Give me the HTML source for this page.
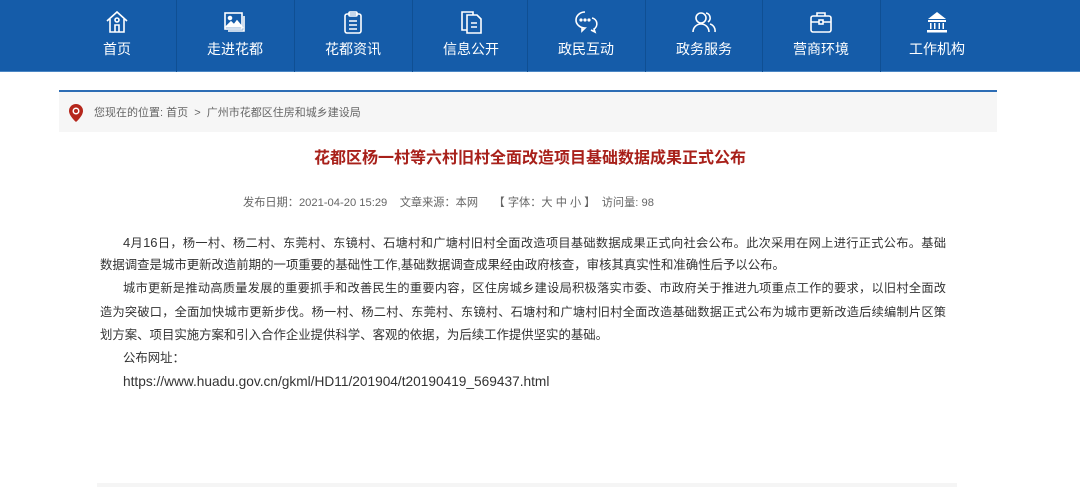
<!DOCTYPE html>
<html><head><meta charset="utf-8"><style>
*{margin:0;padding:0;box-sizing:border-box}
body{width:1080px;height:487px;background:#fff;font-family:"Liberation Sans","Noto Sans CJK SC",sans-serif;position:relative;overflow:hidden}
.nav{position:absolute;left:0;top:0;width:1080px;height:72px;background:#155ca9;border-bottom:1px solid #4a86c4}
.it{position:absolute;top:0;width:118px;height:72px;text-align:center;color:#fff}
.it svg{position:absolute;left:47px;top:10px;width:24px;height:24px}
.it span{position:absolute;left:0;right:0;top:40px;font-size:14px;line-height:18px}
.sep{position:absolute;top:0;width:1px;height:72px;background:#0f4f93}
.bc{position:absolute;left:59px;top:90px;width:938px;height:42px;background:#f6f6f6;border-top:2px solid #2d6db5}
.bc .t{position:absolute;left:35px;top:14px;font-size:11px;color:#666;line-height:14px}
h1{position:absolute;left:0;width:1060px;top:148px;text-align:center;font-size:16px;color:#a8201a;font-weight:bold;line-height:22px}
.meta{position:absolute;left:243px;top:196px;font-size:11.2px;color:#666;line-height:14px;white-space:pre}
.body{position:absolute;left:100px;top:231px;width:846px;font-size:12.4px;line-height:23.2px;color:#333}
.body div{white-space:nowrap;height:23.2px}
.j{text-align:justify;text-align-last:justify;font-size:12.2px}
.in{padding-left:23px}
.u{font-size:13.7px}
.j .u{font-size:13px}
.foot{position:absolute;left:97px;top:483px;width:860px;height:4px;background:#f5f5f5}
</style></head><body>
<div class="nav">
<div class="it" style="left:58px"><svg viewBox="0 0 24 24" fill="none" stroke="#fff" stroke-width="1.6"><path d="M2 11L12 2l10 9"/><path d="M5 9v13h14V9"/><circle cx="12" cy="10" r="2"/><path d="M10 22v-7h4v7"/></svg><span>首页</span></div>
<div class="sep" style="left:176px"></div>
<div class="it" style="left:176px"><svg viewBox="0 0 24 24" fill="none" stroke="#fff" stroke-width="1.6"><rect x="2" y="3" width="17" height="16"/><path d="M21 6v15H5"/><circle cx="7" cy="8" r="1.5" fill="#fff"/><path d="M3 17l5-5 3 3 3-4 5 6z" fill="#fff"/></svg><span>走进花都</span></div>
<div class="sep" style="left:294px"></div>
<div class="it" style="left:294px"><svg viewBox="0 0 24 24" fill="none" stroke="#fff" stroke-width="1.6"><rect x="4" y="4" width="16" height="19" rx="2"/><rect x="8" y="2" width="8" height="4" rx="1"/><path d="M8 11h8M8 15h8M8 19h8"/></svg><span>花都资讯</span></div>
<div class="sep" style="left:412px"></div>
<div class="it" style="left:412px"><svg viewBox="0 0 24 24" fill="none" stroke="#fff" stroke-width="1.6"><path d="M8 5h10l4 4v14H8z"/><path d="M8 20H3V2h11v3"/><path d="M12 13h6M12 17h6"/></svg><span>信息公开</span></div>
<div class="sep" style="left:527px"></div>
<div class="it" style="left:527px"><svg viewBox="0 0 24 24" fill="none" stroke="#fff" stroke-width="1.6"><path d="M11 2a9 8 0 1 0 0 16l-3 3v-3.5"/><path d="M18 8a6 6 0 0 1 2 11l1 3-4-2"/><circle cx="7" cy="10" r=".8" fill="#fff"/><circle cx="11" cy="10" r=".8" fill="#fff"/><circle cx="15" cy="10" r=".8" fill="#fff"/></svg><span>政民互动</span></div>
<div class="sep" style="left:645px"></div>
<div class="it" style="left:645px"><svg viewBox="0 0 24 24" fill="none" stroke="#fff" stroke-width="1.6"><circle cx="9" cy="8" r="5"/><path d="M1 22a8 8 0 0 1 16 0"/><path d="M14 3a5 5 0 0 1 2 9"/><path d="M18 14a7 7 0 0 1 5 8"/></svg><span>政务服务</span></div>
<div class="sep" style="left:762px"></div>
<div class="it" style="left:762px"><svg viewBox="0 0 24 24" fill="none" stroke="#fff" stroke-width="1.6"><rect x="2" y="6" width="20" height="16" rx="2"/><path d="M8 6V3h8v3M2 12h20"/><rect x="10" y="10" width="4" height="4" fill="#155ca9"/></svg><span>营商环境</span></div>
<div class="sep" style="left:880px"></div>
<div class="it" style="left:878px"><svg viewBox="0 0 24 24" fill="#fff"><path d="M12 2L3 9h18z"/><rect x="3" y="10" width="18" height="2"/><rect x="5" y="13" width="1.5" height="6"/><rect x="9" y="13" width="1.5" height="6"/><rect x="13.5" y="13" width="1.5" height="6"/><rect x="17.5" y="13" width="1.5" height="6"/><rect x="2" y="20" width="20" height="2.5"/></svg><span>工作机构</span></div>
</div>
<div class="bc">
<svg style="position:absolute;left:10px;top:12px" width="14" height="18" viewBox="0 0 14 18"><path d="M7 0a7 7 0 0 0-7 7c0 5 7 11 7 11s7-6 7-11a7 7 0 0 0-7-7z" fill="#b5271c"/><circle cx="7" cy="7" r="3.5" fill="#fff"/><circle cx="7" cy="7" r="2" fill="#b5271c"/></svg>
<div class="t">您现在的位置: 首页 &nbsp;&gt;&nbsp; 广州市花都区住房和城乡建设局</div>
</div>
<h1>花都区杨一村等六村旧村全面改造项目基础数据成果正式公布</h1>
<div class="meta">发布日期：2021-04-20 15:29    文章来源：本网     【 字体：大 中 小 】  访问量: 98</div>
<div class="body">
<div class="j in"><span class="u">4</span>月<span class="u">16</span>日，杨一村、杨二村、东莞村、东镜村、石塘村和广塘村旧村全面改造项目基础数据成果正式向社会公布。此次采用在网上进行正式公布。基础</div>
<div>数据调查是城市更新改造前期的一项重要的基础性工作,基础数据调查成果经由政府核查，审核其真实性和准确性后予以公布。</div>
<div class="j in">城市更新是推动高质量发展的重要抓手和改善民生的重要内容，区住房城乡建设局积极落实市委、市政府关于推进九项重点工作的要求，以旧村全面改</div>
<div class="j">造为突破口，全面加快城市更新步伐。杨一村、杨二村、东莞村、东镜村、石塘村和广塘村旧村全面改造基础数据正式公布为城市更新改造后续编制片区策</div>
<div>划方案、项目实施方案和引入合作企业提供科学、客观的依据，为后续工作提供坚实的基础。</div>
<div class="in">公布网址：</div>
<div class="in u">https://www.huadu.gov.cn/gkml/HD11/201904/t20190419_569437.html</div>
</div>
<div class="foot"></div>
</body></html>
